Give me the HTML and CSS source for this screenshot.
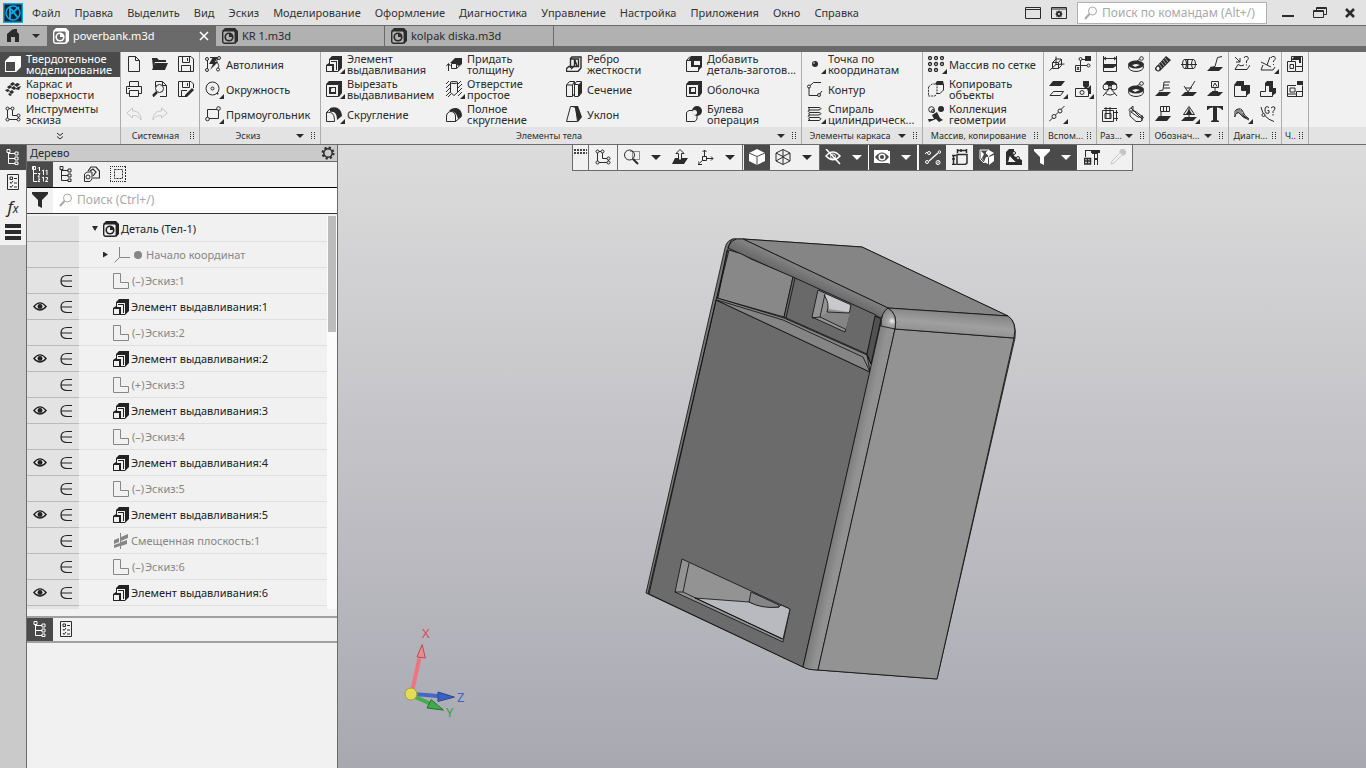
FILE: index.html
```html
<!DOCTYPE html>
<html lang="ru">
<head>
<meta charset="utf-8">
<title>poverbank.m3d</title>
<link rel="stylesheet" href="styles.css">
</head>
<body>
<svg class="sprite" aria-hidden="true">
<symbol id="part" viewBox="0 0 16 16"><path class="f" d="M0 3L3 0H13L16 3V13L13 16V3Z"/><rect x=".7" y="2.7" width="12.6" height="12.6" rx="2" fill="none" stroke-width="1.4"/><circle class="f" cx="7" cy="9" r="4.6"/><path class="hole" d="M7 6A3 3 0 1 0 10 9L7 9Z"/></symbol>
<symbol id="solid" viewBox="0 0 16 16"><path class="f" fill-rule="evenodd" d="M5 0H16V11L11 16H0V5ZM1 6V15H10V6Z"/></symbol>
<symbol id="surf" viewBox="0 0 16 16"><path class="f" d="M5 3l3-2 2 2-3 2zM9 4l3-2 3 1-3 3zM2 6l3-2 2 2-3 2zM6 7l3-2 2 2-2 2zM10 8l3-2 3-1-2 4zM0 9l3-1 2 2-3 1zM4 11l3-2 2 2-2 2zM3 13l2-1 2 2-2 1z"/></symbol>
<symbol id="sketch" viewBox="0 0 16 16"><path d="M2.500 2.500H7.500V9.500H13.500V13.500H2.500Z"/><g class="hole s"><circle cx="2.500" cy="2.500" r="1.500"/><circle cx="7.500" cy="2.500" r="1.500"/><circle cx="13.500" cy="9.500" r="1.500"/><circle cx="13.500" cy="13.500" r="1.500"/><circle cx="2.500" cy="13.500" r="1.500"/></g></symbol>
<symbol id="new" viewBox="0 0 16 16"><path d="M2.500.500H9.500L13.500 4.500V15.500H2.500ZM9.500.500V4.500H13.500"/></symbol>
<symbol id="open" viewBox="0 0 16 16"><path class="f" d="M0 2H5L7 4H14V6H3L1 12ZM3 7H16L13 14H0Z"/></symbol>
<symbol id="save" viewBox="0 0 16 16"><path d="M.500.500H13L15.500 3V15.500H.500ZM4.500.500V6.500H11.500V.500M3.500 15V9.500H12.500V15M9.500 2V5"/></symbol>
<symbol id="saveas" viewBox="0 0 16 16"><path d="M8 15.500H.500V.500H13L15.500 3V7M4.500.500V6.500H11.500V.500M3.500 15V9.500H9M9.500 2V5"/><path class="f" d="M7 14L14 7L16 9L9 16H7Z"/></symbol>
<symbol id="print" viewBox="0 0 16 16"><path d="M3.500 5V.500H12.500V5M3.500 12.500H.500V5.500H15.500V12.500H12.500M3.500 9.500H12.500V15.500H3.500ZM2 7.500H4"/></symbol>
<symbol id="preview" viewBox="0 0 16 16"><path d="M3.500 6V.500H10.500L14.500 4.500V15.500H8M2 15.500H1M10.500.500V4.500H14.500"/><circle cx="7.500" cy="7.500" r="4"/><path stroke-width="2.500" d="M5 11L1 15"/></symbol>
<symbol id="undo" viewBox="0 0 16 16"><path d="M.8 7L6.500 2V5C12 5 15 8 15 14C13 10.500 11 9.500 6.500 9.500V12Z"/></symbol>
<symbol id="redo" viewBox="0 0 16 16"><path d="M15.200 7L9.500 2V5C4 5 1 8 1 14C3 10.500 5 9.500 9.500 9.500V12Z"/></symbol>
<symbol id="auto" viewBox="0 0 16 16"><path d="M2.500 4V13M5 1.500H8M13 3C9 6 16 8 13 12"/><path class="f" d="M8 1H13L10 6H13L5 14L8 8H4Z"/><g class="hole s"><circle cx="2" cy="3" r="1.500"/><circle cx="2" cy="14" r="1.500"/><circle cx="14" cy="2" r="1.500"/><circle cx="13" cy="13.500" r="1.500"/></g></symbol>
<symbol id="circle" viewBox="0 0 16 16"><circle cx="7.500" cy="7.500" r="6.500"/><circle cx="7.500" cy="7.500" r="1.500"/><circle class="f" cx="12.500" cy="12.500" r="1"/></symbol>
<symbol id="rect" viewBox="0 0 16 16"><path d="M2.500 3.500H13.500V12.500H2.500Z"/><g class="hole s"><circle cx="13.500" cy="2.500" r="1.800"/><circle cx="2.500" cy="13" r="1.800"/></g></symbol>
<symbol id="extrude" viewBox="0 0 16 16"><path class="f" d="M3 3L6 0H16V12L12 16H0V9L3 7Z"/><path class="hole" d="M4 4H12V15H8V8H4Z"/><path class="f" d="M5 5H11V14H9V7H5Z"/><path class="hole" d="M5 6H10V14H8V8H5Z"/><path class="hole s" d="M.500 9.500H6.500V15.500H.500Z"/></symbol>
<symbol id="cut" viewBox="0 0 16 16"><path class="f" d="M0 3L3 0H16V12L13 16V3Z"/><path d="M.500 3.500H12.500V15.500H.500Z"/><path class="f" d="M3 6H10V13H3Z"/><path class="hole" d="M6 7H9V11H5V8Z"/></symbol>
<symbol id="fillet" viewBox="0 0 16 16"><path d="M.500 15.500V6.500L4.500 2.500M.500 6.500C7 5.500 8.500 9 8.500 15.500H.500"/><path class="f" d="M4 2C12-1 16 5 16 10L11 14C11 8 9 5 4 6Z"/></symbol>
<symbol id="thick" viewBox="0 0 16 16"><path class="f" d="M4 7L9 2H16V8L12 10L10 7Z"/><path d="M5.500 7.500H10.500V12.500H5.500ZM10.500 12.500L15.500 8M2.500 15V8M.500 10L2.500 7.500L4.500 10"/></symbol>
<symbol id="bore" viewBox="0 0 16 16"><path d="M0 3L3 0M0 7L4 3M0 11L4 7M0 15L4 11M2 16L5 13M12 3L15 0M12 7L16 3M12 11L16 7M12 15L16 11"/><path class="hole s" d="M4.500 1V11.500L8 14.500L11.500 11.500V1Z"/><ellipse class="hole s" cx="8" cy="1.500" rx="3.500" ry="1"/></symbol>
<symbol id="full" viewBox="0 0 16 16"><path d="M.500 15.500V10C1 4 9 4 9.500 10V15.500ZM9.500 15.500L15.500 10.500"/><path class="f" d="M3 5C7 0 16 1 16 10L12 13C11 8 9 5 3 5Z"/></symbol>
<symbol id="rib" viewBox="0 0 16 16"><path stroke-width="1.400" d="M4.500 12V2.500L6 1H15V12L12 15.500H.500V12.500L3 10.500H12.500V3H5M8.500 3V10L5 13M8.500 3L11 10"/></symbol>
<symbol id="section" viewBox="0 0 16 16"><path d="M.500 4L3.500.500H8.500V12.500L6.500 15.500H.500ZM.500 4H6.500V15M6.500 4L8.500.500M8.500 3.500L10.500.500H15.500V12L12.500 15.500H8.500ZM8.500 3.500H12.500"/><path class="f" d="M12 4L15 1V12L13 15H12Z"/></symbol>
<symbol id="draft" viewBox="0 0 16 16"><path d="M4.500.500H9.500L11.500 15.500H.500Z"/><path class="f" d="M5 0H12L16 11L12 16L9 2Z"/></symbol>
<symbol id="addpart" viewBox="0 0 16 16"><path class="f" d="M5 0H16V11L12 15V11H5V5H2Z"/><path d="M.500 4.500L4 .500M.500 4.500H5.500V10.500H12.500V15.500H.500Z"/><path class="hole" d="M8 5H14V9H8Z"/></symbol>
<symbol id="boolean" viewBox="0 0 16 16"><path class="hole s" d="M.500 6.500L3 4.500H11V13L9 15.500H.500Z"/><circle class="f" cx="11" cy="5" r="5"/><circle class="hole" cx="8.500" cy="6.500" r="2.500"/></symbol>
<symbol id="point" viewBox="0 0 16 16"><circle class="f" cx="8" cy="8" r="3"/><circle class="hole" cx="7" cy="7" r=".8"/></symbol>
<symbol id="contour" viewBox="0 0 16 16"><path d="M14 1.500H6.500L2 5.500V14.500H11.500L15 10"/><circle class="hole s" cx="2" cy="5.500" r="1.500"/><circle class="hole s" cx="12" cy="14" r="1.500"/></symbol>
<symbol id="spiral" viewBox="0 0 16 16"><path d="M1 1.500H12Q16 2.500 12 4H3Q-1 5 3 6.500H12Q16 7.500 12 9H3Q-1 10 3 11.500H12Q16 12.500 12 14.500H1M3 1.500Q0 3 3 4M3 6.500Q0 8 3 9M3 11.500Q0 13 3 14"/></symbol>
<symbol id="array" viewBox="0 0 16 16"><g stroke-width="1.300"><circle cx="2" cy="2" r="1.500"/><circle cx="8" cy="2" r="1.500"/><circle cx="14" cy="2" r="1.500"/><circle cx="2" cy="8" r="1.500"/><circle cx="8" cy="8" r="1.500"/><circle cx="14" cy="8" r="1.500"/><circle cx="2" cy="14" r="1.500"/><circle cx="8" cy="14" r="1.500"/></g></symbol>
<symbol id="copy" viewBox="0 0 16 16"><path stroke-dasharray="2 1" d="M.500 6L4 3H9V12L7 15H.500Z"/><path d="M9 3.500H15.500V9L12 12.500H9"/><path class="f" d="M7 3L9 0H15L16 4H9Z"/></symbol>
<symbol id="collect" viewBox="0 0 16 16"><circle cx="3.500" cy="3.500" r="2.800"/><circle cx="5" cy="5" r="1.500"/><circle class="f" cx="13" cy="3" r="3"/><path class="f" d="M4 9L9 6L12 12L15 14L11 16L8 13L1 16L0 13H6Z"/></symbol>
<symbol id="planes" viewBox="0 0 16 16"><path d="M.500 14.500L7 8.500L15.500 8M7 9V.500M3.500 6.500H9.500V12.500H3.500ZM9.500 6.500L12.500 3V9.500L9.500 12.500M3.500 6.500L7 3H12"/></symbol>
<symbol id="lcs" viewBox="0 0 16 16"><path d="M5.500 10V3.500H12M5.500 9.500H14"/><path class="hole s" d="M.500 9.500H5.500V15.500H.500Z"/><path d="M2 11L4 14M4 11L2 14"/><circle class="hole s" cx="5.500" cy="3" r="1.500"/><path class="f" d="M10 0H16V5H10Z"/><circle class="hole s" cx="13.500" cy="9.500" r="1.500"/></symbol>
<symbol id="plane" viewBox="0 0 16 16"><path class="f" d="M4 0H16L12 5H0Z"/><path d="M4.500 10.500H14.500L11.500 14.500H1Z"/></symbol>
<symbol id="camera" viewBox="0 0 16 16"><path d="M.500 7.500H13.500V15.500H.500Z"/><circle cx="7" cy="11.500" r="2"/><path class="f" d="M8 0H14V5L11 8L8 5ZM12 8L16 4V13H14Z"/></symbol>
<symbol id="axis" viewBox="0 0 16 16"><path d="M0 15.500L15.500 0"/><circle class="hole s" cx="5" cy="10.500" r="2"/><circle class="hole s" cx="11" cy="5" r="2"/></symbol>
<symbol id="dim" viewBox="0 0 16 16"><path d="M1.500 0V15.500H14.500V0M1 2.500H15M4 1L2 2.500L4 4M12 1L14 2.500L12 4M1.500 8.500H14.500"/><path class="f" d="M3 8H14V10L11 12H1V9Z"/></symbol>
<symbol id="disc" viewBox="0 0 16 16"><ellipse cx="8" cy="11" rx="7.500" ry="4.500"/><ellipse class="f" cx="8" cy="8.500" rx="8" ry="4"/><path class="hole" d="M4 9L8 8L12 9L7 11Z"/><path d="M5 8L13 2"/><circle class="hole s" cx="13.500" cy="2.500" r="1.800"/></symbol>
<symbol id="angle" viewBox="0 0 16 16"><path class="f" d="M2 3L5 0H11L15 3V8L8 5L2 8Z"/><circle class="hole s" cx="4" cy="6" r="3"/><circle class="hole s" cx="12" cy="6" r="3"/><path d="M1 15L8 7L15 15M3 12Q8 16 13 12"/></symbol>
<symbol id="dims2" viewBox="0 0 16 16"><path d="M.500 4.500H11.500V15.500H.500ZM4 1V13M8 1V13M2 2.500H15M12 6.500H16M12 12.500H16M14.500 4V15M3 7.500H9V12.500H3Z"/></symbol>
<symbol id="diag" viewBox="0 0 16 16"><path d="M.500 4L5 0M3 2L14 13M2 5.500V10L8 15.500H13L15.500 11M1 5H7L15 11H10L3 6M5 0V5M14 9V15"/></symbol>
<symbol id="thread" viewBox="0 0 16 16"><path class="f" d="M0 12L11 0L16 4L5 15Q0 16 0 12Z"/><path class="l" stroke-width=".6" d="M4 8L7 12M6 6L9 10M8 4L11 8M10 2L13 6"/><ellipse class="hole s" cx="3" cy="12.500" rx="2" ry="2.500"/></symbol>
<symbol id="cyl" viewBox="0 0 16 16"><path d="M3.500 3.500H12.500M12.500 12.500H3.500M0 8.500H16"/><ellipse cx="3.500" cy="8" rx="2" ry="4.500"/><ellipse cx="12.500" cy="8" rx="2" ry="4.500"/><path stroke-width="1.500" d="M6.500 4V12"/></symbol>
<symbol id="lead" viewBox="0 0 16 16"><path d="M3 11.500L8 10.500L10.500 1.500L15 .500"/><path class="f" d="M0 15L4 11H16L12 15Z"/></symbol>
<symbol id="base" viewBox="0 0 16 16"><path d="M4 10L8 9L9 1H15M9 4H14M9 7H15"/><path class="f" d="M0 15L4 11H16L12 15Z"/></symbol>
<symbol id="rough" viewBox="0 0 16 16"><path d="M3 5L7 11L14 0M4 7H11"/><path class="f" d="M0 15L4 11H16L12 15Z"/></symbol>
<symbol id="basea" viewBox="0 0 16 16"><path d="M4.500.500H11.500V6.500H4.500ZM6 5.500L8 2L10 5.500M8 7V11M5 10.500H11"/><path class="f" d="M0 15L4 11H16L12 15Z"/></symbol>
<symbol id="tol" viewBox="0 0 16 16"><path d="M5.500.500H14.500V5.500H5.500ZM8.500.500V5.500M11.500.500V5.500M6 6V11"/><path class="f" d="M0 15L4 10H16L12 15Z"/></symbol>
<symbol id="mark" viewBox="0 0 16 16"><path d="M2.500 8.500L8 .500L13.500 8.500ZM8 2V12"/><path class="f" d="M8 3L11 8H5ZM0 15L4 11H16L12 15Z"/></symbol>
<symbol id="text" viewBox="0 0 16 16"><path class="f" d="M0 0H16V4H15Q14 1.500 10 1.500V14L12 15V16H4V15L6 14V1.500Q2 1.500 1 4H0Z"/></symbol>
<symbol id="q1" viewBox="0 0 16 16"><path d="M1 1L6 6M6 2V6H2M10 2Q11-.500 13 .500Q16 2 12.500 5V7M12.500 8.500V9.500M4 8.500L1 13.500H13L16 9M4 8.500Q7 11 10 9"/></symbol>
<symbol id="q2" viewBox="0 0 16 16"><path d="M1 6L7 9L10 1M11 2Q12-.500 14 .500Q17 2 13.500 5V6M13.500 8V9M3 9L1 14H13L15 11M7 9L11 11"/></symbol>
<symbol id="lblock" viewBox="0 0 16 16"><path class="f" d="M0 4L3 0H10V4H16V12L12 15V9H7V4Z"/><path d="M.500 4.500H7.500V9.500H12.500V15.500H.500Z"/></symbol>
<symbol id="tblock" viewBox="0 0 16 16"><path class="f" d="M5 2L7 0H13V7H16V12L12 15V11H5Z"/><path class="hole s" d="M.500 10.500H5.500V4.500H9.500V10.500H12.500V15.500H.500Z"/></symbol>
<symbol id="curv" viewBox="0 0 16 16"><path d="M.500 11Q3 4 6 8Q8 11 15 14M1 5Q5 1 8 4Q10 10 15 13M1 5V11M3 3V8M5 3V7M7 4V9M9 7V11"/><path class="f" d="M8 8L15 13L10 12Z"/></symbol>
<symbol id="g2" viewBox="0 0 16 16"><path d="M1 1Q3 12 14 15.500M9 1.500Q5-1 5 4Q5 8.500 9 7V4.500H7.500M11 2Q13-.500 15 1.500Q15 4 13 5.500V7M13 8V9.500"/><circle class="hole s" cx="3.500" cy="9" r="1.500"/></symbol>
<symbol id="draw1" viewBox="0 0 16 16"><path d="M4.500 5V.500H15.500V10.500H9.500M.500 5.500H8.500V15.500H.500ZM9.500 10.500H15.500V15.500H9"/><path d="M3 8.500H6.500V12.500H3Z"/><path class="f" d="M5 3L7 1H14V7H12V4H5Z"/></symbol>
<symbol id="draw2" viewBox="0 0 16 16"><path d="M9 4.500H.500V15.500H15.500V4.500M.500 13H9M9.500 10.500H15M9.500 10.500V15M3 7H8V11H3Z"/><path class="f" d="M10 0H16V4H10Z"/></symbol>
<symbol id="tree" viewBox="0 0 16 16"><path d="M3.500 1V14.500H10M4 4.500H10M4 9.500H10"/><g class="hole s"><path d="M2 .500h3v3h-3zM10 3h3v3h-3zM10 8h3v3h-3zM10 13h3v2.500h-3z"/></g></symbol>
<symbol id="treenum" viewBox="0 0 16 16"><path d="M1.500 1V15.500H5M2 7.500H5M7.500 1V5M6 2.500L7.500 1M6 7.500H8L6 11H8M6 13H8L6 15.500H8M10 5L11.500 4V9M13.500 5L15 4V9M10 12L11.500 11V15.500M13.500 11.500H15.500V13L13.500 15.500H16"/><path d="M.500 .500h3v3h-3z"/></symbol>
<symbol id="props" viewBox="0 0 16 16"><path d="M2.500.500H13.500V15.500H2.500ZM5 3H7.500V5.500H5ZM9 4.500H12M5 8L6 9.500L8 7M9 9H12M5 12L6 13.500L8 11M9 13H12"/></symbol>
<symbol id="bodies" viewBox="0 0 16 16"><path stroke-width="1.200" d="M4 5L7 1H12L15.500 5V12H9M6 5L9 3L12 6L9 10"/><path class="hole s" d="M.500 8L3 6H8V13L6 15.500H.500Z"/><circle cx="4" cy="11" r="2"/></symbol>
<symbol id="sel" viewBox="0 0 16 16"><path stroke-dasharray="1 1" d="M0 .500H16M.500 0V16M0 15.500H16"/><path stroke-dasharray="2 1" d="M4.500 3.500H12.500V12.500H4.500ZM15.500 0V16"/></symbol>
<symbol id="funnel" viewBox="0 0 16 16"><path class="f" d="M0 0H16V2L10 8V16L6 14V8L0 2Z"/></symbol>
<symbol id="mag" viewBox="0 0 14 14"><circle cx="8.500" cy="5" r="4"/><path stroke-width="2" d="M5.500 8L1 13"/></symbol>
<symbol id="gear" viewBox="0 0 16 16"><circle cx="8" cy="8" r="4.200" stroke-width="1.500"/><circle cx="8" cy="8" r="5.500" stroke-width="2" stroke-dasharray="2.160 2.160"/></symbol>
<symbol id="eye" viewBox="0 0 16 12"><path stroke-width="1.500" d="M1 6Q8-2.500 15 6Q8 14 1 6Z"/><circle class="f" cx="8" cy="6" r="2.800"/></symbol>
<symbol id="in" viewBox="0 0 12 14"><path stroke-width="1.200" d="M12 1.500H7Q1 1.500 1 7Q1 12.500 7 12.500H12M1 7H12"/></symbol>
<symbol id="lshape" viewBox="0 0 16 16"><path d="M.500.500H7.500V9.500H15.500V15.500H.500Z"/></symbol>
<symbol id="origin" viewBox="0 0 16 16"><path d="M5.500 0V10.500H16M5.500 10.500L.500 15.500"/></symbol>
<symbol id="offset" viewBox="0 0 16 16"><path class="f" d="M1 7L6 5V9L1 11ZM8 4L15 1V5L8 8ZM1 12L7 10V13L1 15ZM8 9L14 7V11L8 13Z"/><path d="M7.500 0V16"/></symbol>
<symbol id="tri" viewBox="0 0 10 5"><path class="f" d="M0 0H10L5 5Z"/></symbol>
<symbol id="zoomr" viewBox="0 0 16 16"><circle cx="5.500" cy="6" r="5"/><path stroke-width="2" d="M9 10L14 15"/><path stroke-dasharray="1 1" d="M6.500 2.500H15.500V10.500H8.500V2"/></symbol>
<symbol id="normal" viewBox="0 0 16 16"><path class="f" d="M3 9H16L12 15H0Z"/><path class="hole s" d="M8 .500L12 4.500H9.500V11H6.500V4.500H4Z"/></symbol>
<symbol id="orient" viewBox="0 0 16 16"><path d="M6.500 8V1M8 9.500H15M5 11L.500 15M4.500 3L6.500 1L8.500 3M13 7.500L15 9.500L13 11.500M0 12V15.500H4"/><path class="hole s" d="M4.500 7.500h4v4h-4z"/></symbol>
<symbol id="cube" viewBox="0 0 16 16"><path class="f" d="M8 0L16 4V12L8 16L0 12V4Z"/><path class="l" d="M0 4L8 7.500L16 4M8 8V16"/></symbol>
<symbol id="wire" viewBox="0 0 16 16"><path d="M8 .500L15 4V12L8 15.500L1 12V4ZM1 4L8 7.500L15 4M8 7.500V15.500M8 .500V8M1 12L8 8L15 12"/></symbol>
<symbol id="hide" viewBox="0 0 16 16"><path stroke-width="1.600" d="M1 7Q8-1 15 7Q8 14.500 1 7ZM1 0L15 15"/><circle cx="8" cy="7.500" r="2.500"/></symbol>
<symbol id="show" viewBox="0 0 16 16"><path class="f" d="M0 1H14V2H16V15L14 14H0Z"/><path class="hole" d="M1 8Q8-1 15 8Q8 17 1 8Z"/><circle stroke-width="1.500" cx="8" cy="8" r="2.800"/></symbol>
<symbol id="snap" viewBox="0 0 16 16"><path stroke-width="1.300" d="M4 12L13 4"/><circle cx="2" cy="13" r="1.500"/><circle cx="14.500" cy="3" r="1.300"/><circle cx="13" cy="13.500" r="2"/><circle cx="4" cy="4" r="1.500"/><path d="M0 5L2 3M11 15L15 12"/></symbol>
<symbol id="dimview" viewBox="0 0 16 16"><path stroke-width="1.500" d="M5 5.500H15V14L13 15.500H5ZM5.500 0V4M14.500 0V4M6 1.500H14M9 0V3M0 6.500H4M0 15.500H4M1.500 7V15M0 10H3"/></symbol>
<symbol id="faces" viewBox="0 0 16 16"><path d="M1 1H10L7 4L10 7L5 14L1 10Z"/><path class="f" d="M2 2L5 5L3 9L6 13L2 9ZM7 3L10 1L15 4L10 7ZM10 8L15 6V12L10 16ZM7 8L9 8V15L5 13Z"/></symbol>
<symbol id="lsec" viewBox="0 0 16 16"><path class="f" d="M0 3L3 0H8V7L16 11V16H0Z"/><path class="hole s" d="M1.500 13.500L3.500 6L7 10L11 13.500Z"/><circle class="hole s" cx="8" cy="4" r="1.500"/><circle class="hole s" cx="12" cy="9" r="1.500"/></symbol>
<symbol id="crane" viewBox="0 0 16 16"><path d="M1 1.500H16M1.500 2V8M8 4.500H14M10.500 4V16M13.500 4V16M10 8L14 12M14 8L10 12"/><path class="f" d="M7 1H16V4H7Z"/><path stroke-width="1.500" d="M.500 9.500H6.500V15H.500ZM3.500 9V15M.500 12H6"/></symbol>
<symbol id="pick" viewBox="0 0 16 16"><path class="f" d="M11 0H14L16 2V5L13 7L9 3Z"/><path d="M9.500 4.500L2 12L1 15L4 14L11.500 6.500"/></symbol>
</svg>

<header class="titlebar">
<svg class="logo" viewBox="0 0 20 20"><path fill="#16212b" stroke="#08a9ee" stroke-width="1.500" d="M.7.7H19.3V19.300H.7Z"/><circle cx="10" cy="10" r="7" fill="none" stroke="#08a9ee" stroke-width="1.500"/><path fill="none" stroke="#08a9ee" stroke-width="2" d="M7 3V17M16 4L8 11M8 6L15 15"/></svg>
<nav class="menu"><a href="#">Файл</a><a href="#">Правка</a><a href="#">Выделить</a><a href="#">Вид</a><a href="#">Эскиз</a><a href="#">Моделирование</a><a href="#">Оформление</a><a href="#">Диагностика</a><a href="#">Управление</a><a href="#">Настройка</a><a href="#">Приложения</a><a href="#">Окно</a><a href="#">Справка</a></nav>
<div class="winbar">
<button class="wide" aria-label="Окно"><svg viewBox="0 0 16 16"><path d="M.500 2.500H15.500V13.500H.500ZM0 4.500H16"/></svg></button>
<button class="wide" aria-label="Параметры окна"><svg viewBox="0 0 16 16"><path d="M.500 2.500H15.500V13.500H.500ZM0 4H16"/><circle cx="8" cy="9" r="2" stroke-width="2"/><path d="M8 5.500V7M8 11V12.500M4.500 9H6M10 9H11.500M5.500 6.500L7 8M9 10L10.500 11.500M10.500 6.500L9 8M7 10L5.500 11.500"/></svg></button>
<label class="cmd"><svg><use href="#mag"/></svg><input type="text" placeholder="Поиск по командам (Alt+/)" aria-label="Поиск по командам"></label>
<button aria-label="Свернуть"><svg viewBox="0 0 16 16"><path stroke-width="2" d="M1 11H13"/></svg></button>
<button aria-label="Восстановить"><svg viewBox="0 0 16 16"><path d="M4.500 5V2.500H14.500V9.500H12M1.500 5.500H11.500V12.500H1.500ZM1 6.500H12M4 3.500H15"/></svg></button>
<button aria-label="Закрыть"><svg viewBox="0 0 16 16"><path stroke-width="2.500" d="M3 4L11 12M11 4L3 12"/></svg></button>
</div>
</header>

<div class="tabs">
<button class="home" aria-label="Домой"><svg viewBox="0 0 16 16"><path class="f" d="M2 6L8 1L9 2V1H12V4L14 6V14H10V9H6V14H2Z"/></svg><svg class="ar"><use href="#tri"/></svg></button>
<button class="tab active"><svg><use href="#part"/></svg><span>poverbank.m3d</span><svg class="x" viewBox="0 0 10 10"><path stroke-width="1.600" d="M1 1L9 9M9 1L1 9"/></svg></button>
<button class="tab"><svg><use href="#part"/></svg><span>KR 1.m3d</span></button>
<button class="tab"><svg><use href="#part"/></svg><span>kolpak diska.m3d</span></button>
</div>

<div class="ribbon">
<section class="group"><div class="grid">
<button class="tool on"><svg><use href="#solid"/></svg><span>Твердотельное<br>моделирование</span></button>
<button class="tool"><svg><use href="#surf"/></svg><span>Каркас и<br>поверхности</span></button>
<button class="tool"><svg><use href="#sketch"/></svg><span>Инструменты<br>эскиза</span></button>
</div><footer><svg class="chev" viewBox="0 0 8 8"><path d="M1 1L4 3.500L7 1M1 4.500L4 7L7 4.500"/></svg></footer></section>
<section class="group"><div class="grid">
<button class="sq" aria-label="Создать"><svg><use href="#new"/></svg></button><button class="sq" aria-label="Печать"><svg><use href="#print"/></svg></button><button class="sq off" aria-label="Отменить"><svg><use href="#undo"/></svg></button>
<button class="sq" aria-label="Открыть"><svg><use href="#open"/></svg></button><button class="sq" aria-label="Просмотр"><svg><use href="#preview"/></svg></button><button class="sq off" aria-label="Повторить"><svg><use href="#redo"/></svg></button>
<button class="sq" aria-label="Сохранить"><svg><use href="#save"/></svg></button><button class="sq" aria-label="Сохранить как"><svg><use href="#saveas"/></svg></button>
</div><footer><span>Системная</span><i class="grip"></i></footer></section>
<section class="group"><div class="grid">
<button class="tool"><svg><use href="#auto"/></svg><span>Автолиния</span></button>
<button class="tool more"><svg><use href="#circle"/></svg><span>Окружность</span></button>
<button class="tool more"><svg><use href="#rect"/></svg><span>Прямоугольник</span></button>
</div><footer><span>Эскиз</span><svg class="ar"><use href="#tri"/></svg><i class="grip"></i></footer></section>
<section class="group"><div class="grid">
<button class="tool more"><svg><use href="#extrude"/></svg><span>Элемент<br>выдавливания</span></button>
<button class="tool more"><svg><use href="#cut"/></svg><span>Вырезать<br>выдавливанием</span></button>
<button class="tool more"><svg><use href="#fillet"/></svg><span>Скругление</span></button>
<button class="tool"><svg><use href="#thick"/></svg><span>Придать<br>толщину</span></button>
<button class="tool more"><svg><use href="#bore"/></svg><span>Отверстие<br>простое</span></button>
<button class="tool"><svg><use href="#full"/></svg><span>Полное<br>скругление</span></button>
<button class="tool"><svg><use href="#rib"/></svg><span>Ребро<br>жесткости</span></button>
<button class="tool"><svg><use href="#section"/></svg><span>Сечение</span></button>
<button class="tool"><svg><use href="#draft"/></svg><span>Уклон</span></button>
<button class="tool"><svg><use href="#addpart"/></svg><span>Добавить<br>деталь-заготов...</span></button>
<button class="tool"><svg><use href="#cut"/></svg><span>Оболочка</span></button>
<button class="tool"><svg><use href="#boolean"/></svg><span>Булева<br>операция</span></button>
</div><footer><span>Элементы тела</span><svg class="ar"><use href="#tri"/></svg><i class="grip"></i></footer></section>
<section class="group"><div class="grid">
<button class="tool more"><svg><use href="#point"/></svg><span>Точка по<br>координатам</span></button>
<button class="tool"><svg><use href="#contour"/></svg><span>Контур</span></button>
<button class="tool more"><svg><use href="#spiral"/></svg><span>Спираль<br>цилиндрическ...</span></button>
</div><footer><span>Элементы каркаса</span><svg class="ar"><use href="#tri"/></svg><i class="grip"></i></footer></section>
<section class="group"><div class="grid">
<button class="tool more"><svg><use href="#array"/></svg><span>Массив по сетке</span></button>
<button class="tool"><svg><use href="#copy"/></svg><span>Копировать<br>объекты</span></button>
<button class="tool"><svg><use href="#collect"/></svg><span>Коллекция<br>геометрии</span></button>
</div><footer><span>Массив, копирование</span><i class="grip"></i></footer></section>
<section class="group"><div class="grid">
<button class="sq" aria-label="Плоскости"><svg><use href="#planes"/></svg></button><button class="sq more" aria-label="Плоскость"><svg><use href="#plane"/></svg></button><button class="sq more" aria-label="Ось"><svg><use href="#axis"/></svg></button>
<button class="sq" aria-label="Система координат"><svg><use href="#lcs"/></svg></button><button class="sq more" aria-label="Точка"><svg><use href="#camera"/></svg></button>
</div><footer><span>Вспом...</span><i class="grip"></i></footer></section>
<section class="group"><div class="grid">
<button class="sq" aria-label="Линейный размер"><svg><use href="#dim"/></svg></button><button class="sq" aria-label="Угловой размер"><svg><use href="#angle"/></svg></button><button class="sq" aria-label="Размеры эскиза"><svg><use href="#dims2"/></svg></button>
<button class="sq" aria-label="Диаметр"><svg><use href="#disc"/></svg></button><button class="sq" aria-label="Радиус"><svg><use href="#disc"/></svg></button><button class="sq" aria-label="Наклонный размер"><svg><use href="#diag"/></svg></button>
</div><footer><span>Раз...</span><svg class="ar"><use href="#tri"/></svg><i class="grip"></i></footer></section>
<section class="group"><div class="grid">
<button class="sq" aria-label="Резьба"><svg><use href="#thread"/></svg></button><button class="sq" aria-label="База"><svg><use href="#base"/></svg></button><button class="sq" aria-label="Допуск"><svg><use href="#tol"/></svg></button>
<button class="sq" aria-label="Осевая"><svg><use href="#cyl"/></svg></button><button class="sq" aria-label="Шероховатость"><svg><use href="#rough"/></svg></button><button class="sq more" aria-label="Клеймо"><svg><use href="#mark"/></svg></button>
<button class="sq" aria-label="Выноска"><svg><use href="#lead"/></svg></button><button class="sq" aria-label="Обозначение базы"><svg><use href="#basea"/></svg></button><button class="sq" aria-label="Текст"><svg><use href="#text"/></svg></button>
</div><footer><span>Обознач...</span><svg class="ar"><use href="#tri"/></svg><i class="grip"></i></footer></section>
<section class="group"><div class="grid">
<button class="sq" aria-label="Расстояние"><svg><use href="#q1"/></svg></button><button class="sq" aria-label="МЦХ"><svg><use href="#lblock"/></svg></button><button class="sq more" aria-label="Кривизна"><svg><use href="#curv"/></svg></button>
<button class="sq more" aria-label="Измерить"><svg><use href="#q2"/></svg></button><button class="sq" aria-label="Пересечения"><svg><use href="#tblock"/></svg></button><button class="sq" aria-label="Гладкость"><svg><use href="#g2"/></svg></button>
</div><footer><span>Диагн...</span><i class="grip"></i></footer></section>
<section class="group"><div class="grid">
<button class="sq" aria-label="Чертёж"><svg><use href="#draw1"/></svg></button><button class="sq" aria-label="Вид"><svg><use href="#draw2"/></svg></button>
</div><footer><span>Ч..</span><i class="grip"></i></footer></section>
<section class="rest"><footer></footer></section>
</div>

<div class="work">
<nav class="rail">
<button class="on" aria-label="Дерево"><svg><use href="#tree"/></svg></button>
<button aria-label="Параметры"><svg><use href="#props"/></svg></button>
<button class="fx" aria-label="Переменные">f<sub>x</sub></button>
<button aria-label="Список"><svg viewBox="0 0 16 16"><path stroke-width="4" d="M0 2H16M0 8H16M0 14H16"/></svg></button>
</nav>
<aside class="panel">
<div class="phead"><span>Дерево</span><svg><use href="#gear"/></svg></div>
<div class="ptools"><button class="on" aria-label="Структура"><svg><use href="#treenum"/></svg></button><button aria-label="Дерево"><svg><use href="#tree"/></svg></button><button aria-label="Тела"><svg><use href="#bodies"/></svg></button><button aria-label="Область"><svg><use href="#sel"/></svg></button></div>
<div class="psearch"><button aria-label="Фильтр"><svg><use href="#funnel"/></svg></button><label><svg><use href="#mag"/></svg><input type="text" placeholder="Поиск (Ctrl+/)" aria-label="Поиск в дереве"></label></div>
<div class="treebox">
<ul class="tree">
<li class="root"><b></b><b></b><span class="node"><i class="dn"></i><svg><use href="#part"/></svg>Деталь (Тел-1)</span></li>
<li class="dim org"><b></b><b></b><span class="node"><i class="rt"></i><svg><use href="#origin"/></svg><i class="dot"></i>Начало координат</span></li>
<li class="dim"><b></b><b><svg class="in"><use href="#in"/></svg></b><span class="node"><svg><use href="#lshape"/></svg><em>(–)</em>Эскиз:1</span></li>
<li><b><svg class="eye"><use href="#eye"/></svg></b><b><svg class="in"><use href="#in"/></svg></b><span class="node"><svg><use href="#extrude"/></svg>Элемент выдавливания:1</span></li>
<li class="dim"><b></b><b><svg class="in"><use href="#in"/></svg></b><span class="node"><svg><use href="#lshape"/></svg><em>(–)</em>Эскиз:2</span></li>
<li><b><svg class="eye"><use href="#eye"/></svg></b><b><svg class="in"><use href="#in"/></svg></b><span class="node"><svg><use href="#extrude"/></svg>Элемент выдавливания:2</span></li>
<li class="dim"><b></b><b><svg class="in"><use href="#in"/></svg></b><span class="node"><svg><use href="#lshape"/></svg><em>(+)</em>Эскиз:3</span></li>
<li><b><svg class="eye"><use href="#eye"/></svg></b><b><svg class="in"><use href="#in"/></svg></b><span class="node"><svg><use href="#extrude"/></svg>Элемент выдавливания:3</span></li>
<li class="dim"><b></b><b><svg class="in"><use href="#in"/></svg></b><span class="node"><svg><use href="#lshape"/></svg><em>(–)</em>Эскиз:4</span></li>
<li><b><svg class="eye"><use href="#eye"/></svg></b><b><svg class="in"><use href="#in"/></svg></b><span class="node"><svg><use href="#extrude"/></svg>Элемент выдавливания:4</span></li>
<li class="dim"><b></b><b><svg class="in"><use href="#in"/></svg></b><span class="node"><svg><use href="#lshape"/></svg><em>(–)</em>Эскиз:5</span></li>
<li><b><svg class="eye"><use href="#eye"/></svg></b><b><svg class="in"><use href="#in"/></svg></b><span class="node"><svg><use href="#extrude"/></svg>Элемент выдавливания:5</span></li>
<li class="dim"><b></b><b><svg class="in"><use href="#in"/></svg></b><span class="node"><svg><use href="#offset"/></svg>Смещенная плоскость:1</span></li>
<li class="dim"><b></b><b><svg class="in"><use href="#in"/></svg></b><span class="node"><svg><use href="#lshape"/></svg><em>(–)</em>Эскиз:6</span></li>
<li><b><svg class="eye"><use href="#eye"/></svg></b><b><svg class="in"><use href="#in"/></svg></b><span class="node"><svg><use href="#extrude"/></svg>Элемент выдавливания:6</span></li>
<li class="cutoff"><b></b><b></b><span class="node"></span></li>
</ul>
<div class="track"><div class="thumb"></div></div>
</div>
<div class="ptabs"><button class="on" aria-label="Дерево"><svg><use href="#tree"/></svg></button><button aria-label="Параметры"><svg><use href="#props"/></svg></button></div>
<div class="pbody"></div>
</aside>
<main class="view">
<svg class="scene" viewBox="338 145 1028 623">
<defs>
<linearGradient id="gv" gradientUnits="userSpaceOnUse" x1="836" y1="500" x2="859" y2="505"><stop offset="0" stop-color="#727272"/><stop offset=".6" stop-color="#929292"/><stop offset="1" stop-color="#949494"/></linearGradient>
<linearGradient id="gh" gradientUnits="userSpaceOnUse" x1="950" y1="312" x2="948" y2="334"><stop offset="0" stop-color="#858585"/><stop offset=".55" stop-color="#a0a0a0"/><stop offset="1" stop-color="#919191"/></linearGradient>
<linearGradient id="gf" gradientUnits="userSpaceOnUse" x1="815" y1="272" x2="809" y2="285"><stop offset="0" stop-color="#858585"/><stop offset="1" stop-color="#686868"/></linearGradient>
<radialGradient id="gb" gradientUnits="userSpaceOnUse" cx="892" cy="321" r="12"><stop offset="0" stop-color="#f2f2f2"/><stop offset=".3" stop-color="#aaa"/><stop offset="1" stop-color="#848484"/></radialGradient>
</defs>
<g stroke="#0c0c0c" stroke-width=".8" stroke-linejoin="round">
<path fill="#777" d="M646 593L725 248Q727 239 735 239L743 239L862 247L1008 316Q1017 322 1015 338L937 679L818 670Q809 670 803 667Z"/>
<path fill="#858585" d="M743 239L862 247L1008 316L888 308Z"/>
<path fill="url(#gf)" d="M732 239H743L888 308L881 318L728 248Z"/>
<path fill="#6b6b6b" d="M649 594L716 300L870 372L803 667Z"/>
<path fill="none" d="M648 594L728 249Q728 243 736 239"/>
<path fill="#888" d="M729 250Q742 253 751 259L793 277L784 317L717 298Z"/>
<path fill="#696969" d="M793 277L876 315L867 354L784 317Z"/>
<path fill="#858585" d="M717 298L784 318L867 355L870 372L716 300Z"/>
<path fill="none" d="M727 250L718 298M795 278L786 318M717 300L783 320L863 357L870 372M867 355L871 364"/>
<path fill="#515151" d="M875 316L881 319L871 364L867 354Z"/>
<path fill="#949494" d="M818 290L851 305L845 332L812 317Z"/>
<path fill="#858585" stroke="none" d="M828 312L850 313L846 329L820 317Z"/>
<path fill="#c9c9cb" stroke="none" d="M825 294L850 305L849 312L829 309Z"/>
<path fill="none" d="M825 294L820 317L845 329M824 295Q830 303 827 312L849 313M820 317L812 318"/>
<path fill="url(#gv)" d="M803 667L881 322L895 329L818 670Q808 670 803 667Z"/>
<path fill="#939393" d="M818 670L895 329L1014 338L937 679Z"/>
<path fill="url(#gh)" d="M888 308L1008 316Q1017 322 1014 338L895 329Q898 314 888 308Z"/>
<path fill="url(#gb)" d="M888 308Q881 312 881 326L895 329Q898 314 888 308Z"/>
<path fill="#939393" d="M682 559L790 609L783 642L675 592Z"/>
<path fill="#b9b9c0" d="M695 598L749 602Q762 608 779 607L781 605L790 609L783 639Z"/>
<path fill="#858585" d="M751 592L749 602Q762 609 779 607V605Z"/>
<path fill="none" d="M689 563L683 592L782 639M675 592H683"/>
</g>
<g stroke-linecap="round">
<path stroke="#ef7480" stroke-width="4" d="M412 692L419 660"/><path fill="#e98b91" stroke="#b84b52" d="M422 645L417 657L425 658Z"/>
<path stroke="#4668c4" stroke-width="4" d="M413 694L438 696"/><path fill="#3a5fc8" stroke="#26458f" d="M454 697L438 692V701Z"/>
<path stroke="#46ac4e" stroke-width="4" d="M413 696L431 704"/><path fill="#3fab49" stroke="#23722c" d="M443 710L427 708L431 700Z"/>
<circle cx="411" cy="694" r="6" fill="#e3dc58" stroke="#a79f36"/>
</g>
<g class="axes"><text x="422" y="638" fill="#db4a55">X</text><text x="457" y="702" fill="#3b63c8">Z</text><text x="446" y="717" fill="#36a341">Y</text></g>
</svg>
<div class="vbar">
<div class="g"><span class="dots"></span></div>
<div class="g"><button class="t" aria-label="Эскиз"><svg><use href="#sketch"/></svg></button></div>
<div class="g"><button class="t" aria-label="Масштаб"><svg><use href="#zoomr"/></svg></button><button class="a" aria-label="Ещё масштаб"><svg><use href="#tri"/></svg></button><button class="t" aria-label="Нормально к"><svg><use href="#normal"/></svg></button><button class="t" aria-label="Ориентация"><svg><use href="#orient"/></svg></button><button class="a" aria-label="Ещё ориентация"><svg><use href="#tri"/></svg></button></div>
<div class="g"><button class="t on" aria-label="Полутоновое"><svg><use href="#cube"/></svg></button><button class="t" aria-label="Каркас"><svg><use href="#wire"/></svg></button><button class="a" aria-label="Ещё отображение"><svg><use href="#tri"/></svg></button></div>
<div class="g on"><button class="t" aria-label="Скрыть"><svg><use href="#hide"/></svg></button><button class="a" aria-label="Ещё скрыть"><svg><use href="#tri"/></svg></button></div>
<div class="g on"><button class="t" aria-label="Показать"><svg><use href="#show"/></svg></button><button class="a" aria-label="Ещё показать"><svg><use href="#tri"/></svg></button></div>
<div class="g modes"><button class="t on" aria-label="Привязки"><svg><use href="#snap"/></svg></button><button class="t" aria-label="Размеры"><svg><use href="#dimview"/></svg></button><button class="t on" aria-label="Грани"><svg><use href="#faces"/></svg></button><button class="t" aria-label="Сечение"><svg><use href="#lsec"/></svg></button></div>
<div class="g on"><button class="t" aria-label="Фильтр"><svg><use href="#funnel"/></svg></button><button class="a" aria-label="Ещё фильтры"><svg><use href="#tri"/></svg></button></div>
<div class="g"><button class="t" aria-label="Перестроить"><svg><use href="#crane"/></svg></button><button class="t off" aria-label="Пипетка"><svg><use href="#pick"/></svg></button></div>
</div>
</main>
</div>
</body>
</html>
```

FILE: styles.css
```css
:root{--ink:#2b2b2b;--bg:#f1f1f1;--mid:#e3e3e3;--dark:#4a4a4a;--line:#6b6b6b}
*{box-sizing:border-box}
body{margin:0;height:100vh;display:flex;flex-direction:column;overflow:hidden;font:11px/16px "Noto Sans","Open Sans",sans-serif;color:var(--ink);background:var(--mid)}
button{font:inherit;color:inherit;background:none;border:0;padding:0;margin:0;text-align:left;--hole:var(--bg)}
input{font:inherit;font-size:12px;border:0;background:none;padding:0;outline:0;min-width:0;flex:1}
input::placeholder{color:#a9a9a9;opacity:1}
svg{width:16px;height:16px;flex:none;fill:none;stroke:currentColor;stroke-width:1}
.f{fill:currentColor;stroke:none}
.hole{fill:var(--hole,#f1f1f1);stroke:none}
.hole.s{stroke:currentColor}
.l{stroke:var(--hole,#f1f1f1)}
.sprite{position:absolute;width:0;height:0}

.titlebar{display:flex;align-items:center;height:26px;border-bottom:1px solid var(--line);padding-left:3px;flex:none}
.titlebar .logo{width:20px;height:20px;margin-right:2px}
.menu{display:flex}
.menu a{color:#333;text-decoration:none;padding:0 7px}
.winbar{display:flex;align-items:center;margin-left:auto}
.winbar button{width:31px;height:24px;display:flex;align-items:center;justify-content:center}
.winbar button.wide{width:26px}
.cmd{display:flex;align-items:center;width:190px;height:22px;background:#fff;border:1px solid #b1b1b1;margin:0 6px 0 5px;padding:0 6px;gap:4px;color:#a9a9a9}
.cmd svg,.psearch label svg{width:14px;height:14px}

.tabs{display:flex;height:26px;flex:none;background:#b1b1b1;border-bottom:6px solid #6a6a6a;padding-left:1px}
.home{display:flex;align-items:center;width:46px;padding-left:4px;gap:11px}
.ar{width:8px;height:4px}
.tab{display:flex;align-items:center;gap:4px;width:169px;padding:0 6px;border-right:1px solid #6a6a6a;--hole:#b1b1b1}
.tab.active{background:#6a6a6a;color:#fff;--hole:#6a6a6a}
.tab .x{width:10px;height:10px;margin-left:auto}

.ribbon{display:flex;flex:none;background:var(--bg);border-bottom:1px solid var(--line)}
.group,.rest{display:flex;flex-direction:column}
.group{border-right:1px solid #acacac}
.rest{flex:1;justify-content:flex-end}
.grid{display:grid;grid-auto-flow:column;grid-template-rows:repeat(3,25px)}
.tool{display:flex;align-items:center;gap:5px;width:120px;padding:0 0 1px 5px;line-height:11px;white-space:nowrap}
.sq{display:flex;align-items:center;width:26px;padding:0 0 1px 5px}
.on{background:var(--dark);color:#fff;--hole:#4a4a4a}
.off{color:#c6c6c6}
.more{position:relative}
.more::after{content:"";position:absolute;left:19px;bottom:3px;width:5px;height:5px;background:var(--ink);clip-path:polygon(100% 0,100% 100%,0 100%)}
.ribbon footer{display:flex;align-items:center;height:17px;background:var(--mid);font-size:9px;line-height:16px}
.ribbon footer span{flex:1;text-align:center;white-space:nowrap;overflow:hidden}
.ribbon footer .ar{margin-right:7px}
.chev{width:8px;height:8px;margin:0 auto}
.grip{width:5px;height:8px;margin-right:4px;background:repeating-linear-gradient(var(--ink) 0 1px,transparent 1px 2px);mask:linear-gradient(90deg,#000 0 1px,transparent 1px 3px,#000 3px 4px,transparent 4px)}

.work{display:flex;flex:1;min-height:0}
.rail{width:26px;background:#cacaca;flex:none}
.rail button,.ptools button,.ptabs button,.psearch button{display:flex;align-items:center;justify-content:center;width:26px;height:25px;padding-bottom:1px}
.rail button:not(.on),.psearch button{background:var(--bg)}
.rail .on,.ptools .on,.ptabs .on,.g.on button{--hole:#4a4a4a}
.rail .fx{font:italic 17px/20px "Noto Sans",sans-serif}
.fx sub{font-size:12px;line-height:12px;padding-top:4px}
.panel{display:flex;flex-direction:column;width:312px;flex:none;border:solid var(--line);border-width:0 1px;background:var(--bg)}
.phead{display:flex;align-items:center;justify-content:space-between;height:17px;background:#cacaca;border-bottom:1px solid var(--line);padding:0 1px 0 3px}
.ptools{display:flex;height:26px;border-bottom:1px solid #000}
.psearch{display:flex;height:26px;background:#fff;border-bottom:1px solid #333}
.psearch label{display:flex;flex:1;align-items:center;gap:4px;padding:0 0 1px 6px;color:#a9a9a9}
.treebox{display:flex;height:395px;overflow:hidden;padding-top:2px}
.tree{list-style:none;margin:0;padding:0;flex:1}
.tree li{display:flex;height:26px;color:#222}
.tree b{display:flex;align-items:center;justify-content:center;width:26px;background:var(--mid);border-bottom:1px solid #bababa;color:#222}
.node{display:flex;align-items:center;flex:1;gap:2px;padding-left:34px;border-bottom:1px solid #e0e0e0;white-space:nowrap}
.tree .dim{color:#868686}
.root .node{padding-left:13px}
.org .node{padding-left:24px}
.org .node svg{margin-left:4px}
.root .node svg{margin-left:3px}
.node:has(em){gap:0}
.node em{font-style:normal;width:14px;text-align:center;margin-left:2px}
.dn{width:6px;height:5px;background:var(--ink);clip-path:polygon(0 0,100% 0,50% 100%)}
.rt{width:5px;height:6px;background:var(--ink);clip-path:polygon(0 0,100% 50%,0 100%)}
.dot{width:8px;height:8px;border-radius:50%;background:#868686;margin:0 2px}
.tree .eye{width:14px;height:11px}
.tree .in{width:12px;height:14px}
.track{width:10px;background:#fbfbfb;padding:0 1px}
.thumb{height:116px;background:#bcbcbc}
.ptabs{display:flex;height:27px;margin-top:7px;border:solid #a0a0a0;border-width:2px 0}
.ptabs button{height:23px}
.pbody{flex:1}

.view{flex:1;position:relative;min-width:0;background:linear-gradient(#dcdcdc,#a8a8b1)}
.scene{display:block;width:100%;height:100%}
.axes{font:13px "Noto Sans",sans-serif;stroke:none}
.vbar{position:absolute;left:50%;top:0;margin-left:-280px;display:flex;height:26px;background:var(--bg);border:solid var(--line);border-width:0 1px 1px}
.vbar .g{display:flex;border-right:1px solid var(--line);padding:0 1px}
.vbar .g:last-child{border:0}
.vbar .g.on{border-right-color:#fff;padding:0}
.t,.a{display:flex;align-items:center;justify-content:center;width:26px;padding-bottom:1px}
.modes .t{width:27px}
.a{width:22px}
.a svg{width:10px;height:5px}
.dots{width:13px;height:9px;margin-top:3px;background:linear-gradient(var(--bg) 0 1px,transparent 1px 3px,var(--bg) 3px 4px,transparent 4px 6px,var(--bg) 6px),repeating-linear-gradient(90deg,#444 0 2px,transparent 2px 3px)}
```
